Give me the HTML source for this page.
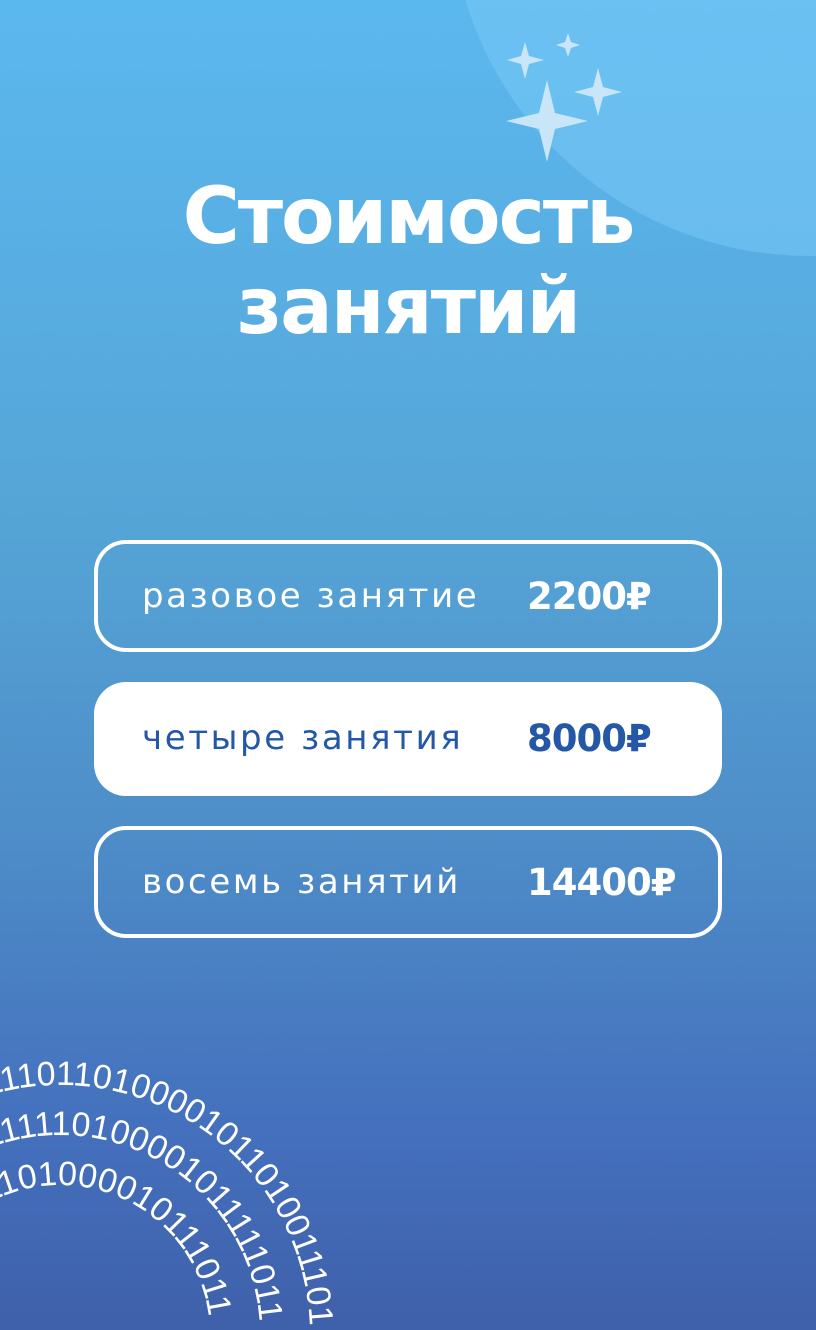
<!DOCTYPE html>
<html><head><meta charset="utf-8"><style>
html,body{margin:0;padding:0}
body{width:816px;height:1330px;position:relative;overflow:hidden;background:linear-gradient(180deg,#5bb8ef 0%,#55a4d6 40%,#4e8ec9 62%,#4470bd 85%,#3f60aa 100%);font-family:"DejaVu Sans","Liberation Sans",sans-serif;color:#fff}
.circle{position:absolute;left:450px;top:-464px;width:720px;height:720px;border-radius:50%;background:rgba(120,200,245,0.55)}
h1{position:absolute;left:0;width:816px;top:172px;margin:0;text-align:center;font-weight:bold;font-size:78px;line-height:90px;letter-spacing:-2px}
.box{position:absolute;left:94px;width:628px;height:112px;box-sizing:border-box;border:4px solid #fff;border-radius:32px}
.box.w{background:#fff;border:none;color:#2458a6}
.lab{position:absolute;left:44px;top:32px;font-size:34px;letter-spacing:2.6px}
.box.w .lab{left:48px;top:36px}
.pr{position:absolute;left:429px;top:31px;font-size:37px;font-weight:bold;letter-spacing:-1px}
.box.w .pr{left:433px;top:35px}
</style></head><body>
<div class="circle"></div>
<svg style="position:absolute;left:0;top:0" width="816" height="260">
<g fill="#c8e6f8">
<path d="M547 80 L555 113 L588 121 L555 129 L547 162 L539 129 L506 121 L539 113Z"/>
<path d="M598 68 L603 87 L622 92 L603 97 L598 116 L593 97 L574 92 L593 87Z"/>
<path d="M525 42 L529 56 L544 60 L529 64 L525 79 L521 64 L507 60 L521 56Z"/>
<path d="M568 33 L571 42 L580 45 L571 48 L568 57 L565 48 L556 45 L565 42Z"/>
</g></svg>
<h1>Стоимость<br>занятий</h1>
<div class="box" style="top:540px"><span class="lab">разовое занятие</span><span class="pr">2200₽</span></div>
<div class="box w" style="top:682px;height:114px"><span class="lab">четыре занятия</span><span class="pr">8000₽</span></div>
<div class="box" style="top:826px"><span class="lab">восемь занятий</span><span class="pr">14400₽</span></div>
<svg style="position:absolute;left:0;top:1000px" width="816" height="330" font-family="Liberation Sans, sans-serif" font-size="34" letter-spacing="0" fill="#fff">
<defs>
<path id="a1" d="M-190 335 A 250 250 0 0 1 310 335"/>
<path id="a2" d="M-140 335 A 200 200 0 0 1 260 335"/>
<path id="a3" d="M-90 335 A 150 150 0 0 1 210 335"/>
</defs>
<text><textPath href="#a1" startOffset="318">1110110100001011010011101</textPath></text>
<text><textPath href="#a2" startOffset="240">111110100001011111011</textPath></text>
<text><textPath href="#a3" startOffset="160">1101000010111011</textPath></text>
</svg>
</body></html>
